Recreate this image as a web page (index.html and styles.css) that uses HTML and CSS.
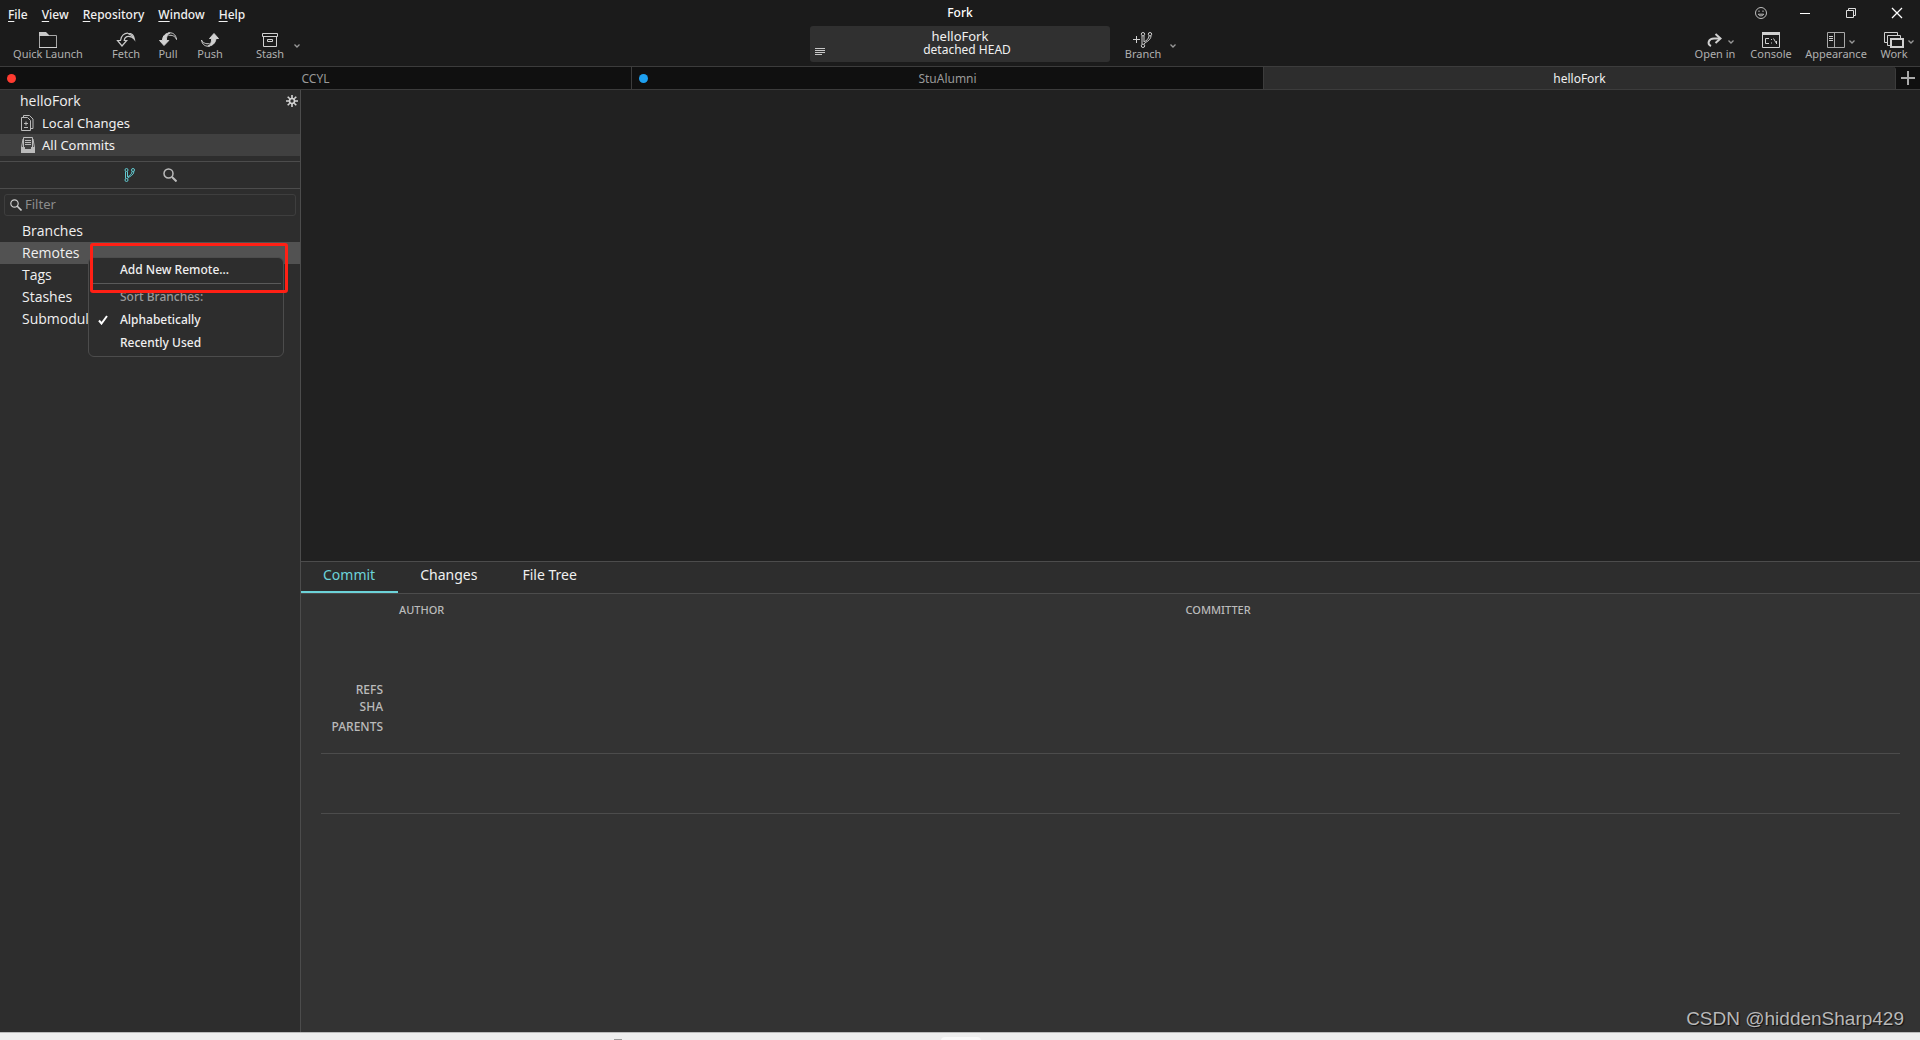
FILE: index.html
```html
<!DOCTYPE html>
<html lang="en">
<head>
<meta charset="utf-8">
<meta name="viewport" content="width=device-width, initial-scale=1">
<title>Fork</title>
<link rel="stylesheet" href="styles.css">
</head>
<body>
<header class="titlebar">
  <nav class="menubar" aria-label="Main menu">
    <button class="menubar-item"><u>F</u>ile</button>
    <button class="menubar-item"><u>V</u>iew</button>
    <button class="menubar-item"><u>R</u>epository</button>
    <button class="menubar-item"><u>W</u>indow</button>
    <button class="menubar-item"><u>H</u>elp</button>
  </nav>
  <h1 class="app-title">Fork</h1>
  <div class="window-controls">
    <button class="window-button window-feedback" aria-label="Feedback"><svg width="14" height="14" viewBox="0 0 14 14" fill="none" stroke="#bdbdbd"><circle cx="7" cy="7" r="5.5"/><path d="M4.3 8.2c.7 2.2 4.700 2.200 5.400 0z"/><path d="M5 4.500v1.500M9 4.500v1.500"/></svg></button>
    <button class="window-button" aria-label="Minimize"><svg width="12" height="12"><path d="M1 6.500h10" stroke="#fff"/></svg></button>
    <button class="window-button" aria-label="Restore"><svg width="12" height="12" fill="none" stroke="#ddd"><path d="M1.500 3.500h7v7h-7zM3.500 3.500v-2h7v7h-2"/></svg></button>
    <button class="window-button" aria-label="Close"><svg width="12" height="12"><path d="M1 1l10 10M11 1L1 11" stroke="#fff" stroke-width="1.300"/></svg></button>
  </div>
</header>

<div class="toolbar">
  <div class="tools">
    <button class="tool tool-launch"><span class="tool-icon"><svg width="20" height="16" fill="none" stroke="#a8a8a8"><path d="M1.500 2v13.500h17v-12H10"/><path d="M1 0h7l3 3v1H1z" fill="#c8c8c8" stroke="none"/><path d="M1 15.500h18" stroke="#d0d0d0"/></svg></span>Quick Launch</button>
    <div class="tool-group">
      <button class="tool"><span class="tool-icon"><svg width="20" height="16" viewBox="0 0 20 16" fill="none" stroke="#c8c8c8" stroke-width="1.200"><path d="M6 14L1.500 8.500h3C5 3.500 8.500 1 12 1.200c3.500 0 6 2.300 6.500 6.300C15.500 3.500 9 3 8.200 8.500h2.500z"/><path d="M18 6.500c-2-4-4.500-4.500-6-5"/></svg></span>Fetch</button>
      <button class="tool"><span class="tool-icon"><svg width="20" height="16" viewBox="0 0 20 16" fill="none" stroke="#d0d0d0"><path d="M6 13.500L1.500 8.500h3C4.500 3.500 8 1 12 1c-2 .8-3.500 3-3.700 7.500h2.500z" fill="#d0d0d0"/><path d="M10 1c4.500-1 8 1.500 8.500 6.500C17.500 4.500 14 2.500 10.500 3.500"/></svg></span>Pull</button>
      <button class="tool"><span class="tool-icon"><svg width="20" height="16" viewBox="0 0 20 16" fill="none" stroke="#d0d0d0"><path d="M14 1.500l4.500 5H16c-.5 5-4 7.500-8 7.500 2-.8 3.500-3 3.700-7.500H9.500z" fill="#d0d0d0"/><path d="M10 14c-4.500 1-8-1.500-8.500-6C2.500 10.500 6 12.500 9.500 11.500"/></svg></span>Push</button>
    </div>
    <div class="tool-split">
      <button class="tool"><span class="tool-icon"><svg width="18" height="16" fill="none" stroke="#d0d0d0"><path d="M1.500 1.500h15v3h-15zM2.500 4.500v10h13v-10"/><path d="M6.500 7.500h5v2h-5z"/></svg></span>Stash</button>
      <button class="chevron-button" aria-label="Stash options"><svg class="chevron" width="6" height="4"><path d="M.5 .5L3 3L5.500 .5" fill="none" stroke="#999" stroke-width="1.300"/></svg></button>
    </div>
  </div>
  <div class="repo-status">
    <button class="status-log" aria-label="Activity log"><svg width="10" height="8"><path d="M0 .5h10M0 2.500h10M0 4.500h10M0 6.500h7" stroke="#c8c8c8"/></svg></button>
    <strong class="status-name">helloFork</strong>
    <span class="status-head">detached HEAD</span>
  </div>
  <div class="tools tools-right">
    <div class="tool-split branch-split">
      <button class="tool tool-branch"><span class="tool-icon"><svg width="20" height="16" viewBox="0 0 20 16" fill="none" stroke="#d0d0d0"><path d="M0 7.500h7M3.500 4v7"/><circle cx="10" cy="2.200" r="1.700"/><circle cx="17" cy="2.200" r="1.700"/><circle cx="10" cy="13.800" r="1.700"/><path d="M9 4v8M11 4v6c2.500-1.500 4.800-3 5-6M18 4c-.3 4.500-5 5.500-7 8"/></svg></span>Branch</button>
      <button class="chevron-button" aria-label="Branch options"><svg class="chevron" width="6" height="4"><path d="M.5 .5L3 3L5.500 .5" fill="none" stroke="#999" stroke-width="1.300"/></svg></button>
    </div>
    <div class="tool-group tool-views">
      <button class="tool tool-medium"><span class="tool-icon"><svg width="18" height="16" fill="none" stroke="#d0d0d0" stroke-width="2"><path d="M5 14c-4-2-3-8 4-7.500h5"/><path d="M9.500 2L14.500 6.500L9.500 11"/></svg><svg class="chevron icon-chevron" width="6" height="4"><path d="M.5 .5L3 3L5.500 .5" fill="none" stroke="#999" stroke-width="1.300"/></svg></span>Open in</button>
      <button class="tool tool-medium"><span class="tool-icon"><svg width="18" height="16" fill="none" stroke="#d0d0d0"><path d="M.5 .5h17v15H.5z"/><path d="M0 1.500h18" stroke-width="3"/><path d="M7 6.500H3.500v5H7M9.500 7v1M9.500 10.500v1M11.500 6.500l3 5M14.500 9v3"/></svg></span>Console</button>
      <button class="tool tool-wide"><span class="tool-icon"><svg width="18" height="16" fill="none" stroke="#a8a8a8"><path d="M.5 .5h17v15H.5zM7.500 0v16"/><path d="M2 4.500h4M2 6.500h4M2 8.500h4" stroke="#d0d0d0"/></svg><svg class="chevron icon-chevron" width="6" height="4"><path d="M.5 .5L3 3L5.500 .5" fill="none" stroke="#999" stroke-width="1.300"/></svg></span>Appearance</button>
      <button class="tool"><span class="tool-icon"><svg width="20" height="16" fill="none" stroke="#d0d0d0"><path d="M3.500 10.500h-3V.5h13v3M6.500 13.500h-3v-10h13v3"/><path d="M7 7h12v8H7z" stroke-width="2"/></svg><svg class="chevron icon-chevron" width="6" height="4"><path d="M.5 .5L3 3L5.500 .5" fill="none" stroke="#999" stroke-width="1.300"/></svg></span>Work</button>
    </div>
  </div>
</div>

<div class="repo-tabs" role="tablist">
  <button class="repo-tab" role="tab"><i class="dot dot-red"></i>CCYL</button>
  <button class="repo-tab" role="tab"><i class="dot dot-blue"></i>StuAlumni</button>
  <button class="repo-tab repo-tab-active" role="tab" aria-selected="true">helloFork</button>
  <button class="add-tab" aria-label="New tab"><svg width="14" height="14"><path d="M7 0v14M0 7h14" stroke="#aaa" stroke-width="2"/></svg></button>
</div>

<div class="workspace">
  <aside class="sidebar">
    <div class="sidebar-top">
      <div class="side-row repo-row"><span>helloFork</span>
        <button class="gear" aria-label="Repository settings"><svg width="12" height="12" viewBox="0 0 12 12" fill="none" stroke="#d4d4d4"><circle cx="6" cy="6" r="2.500" stroke-width="1.600"/><path d="M6 0v3M6 9v3M0 6h3M9 6h3M1.700 1.700l2.100 2.100M8.200 8.200l2.100 2.100M1.700 10.300l2.100-2.100M8.200 3.800l2.100-2.100" stroke-width="1.600"/></svg></button>
      </div>
      <a class="side-row side-link" href="#changes"><svg width="14" height="16" fill="none" stroke="#bbb"><path d="M.5 2.500h6l3 3v10h-9z"/><path d="M2.500 2V.5h6l3.500 3.500v9.500h-2"/><path d="M3 8.500h4M5 6.500v4M3 12.500h4"/></svg>Local Changes</a>
      <a class="side-row side-link side-current" href="#commits"><svg width="14" height="16" fill="none" stroke="#bbb"><path d="M2.500 10.500V.5h9v10"/><path d="M4 3.500h6M4 5.500h6M4 7.500h6"/><path d="M2 2L.5 10.500v5h13v-5L12 2"/><path d="M0 10h4v2h6v-2h4v6H0z" fill="#bbb" stroke="none"/></svg>All Commits</a>
    </div>
    <div class="side-modes">
      <button aria-label="References"><svg width="12" height="14" viewBox="0 0 12 14" fill="none" stroke="#62c9d0"><circle cx="2.500" cy="2" r="1.500"/><circle cx="9" cy="2" r="1.500"/><circle cx="2.500" cy="12" r="1.500"/><path d="M1.500 3.500v7M3.500 3.500v5.500C6 7.500 8 6 8 3.500M10 3.500c-.2 4-4.500 4.500-6.500 7"/></svg></button>
      <button aria-label="Search"><svg width="14" height="14" fill="none" stroke="#bbb"><circle cx="5.500" cy="5.500" r="4.500" stroke-width="1.500"/><path d="M9 9l4.500 4.500" stroke-width="2"/></svg></button>
    </div>
    <label class="filter"><svg width="12" height="12" fill="none" stroke="#ccc"><circle cx="4.500" cy="4.500" r="3.700" stroke-width="1.200"/><path d="M7 7l4.500 4.500" stroke-width="1.600"/></svg><input type="text" placeholder="Filter" aria-label="Filter"></label>
    <ul class="refs">
      <li class="side-row">Branches</li>
      <li class="side-row ref-selected">Remotes
        <div class="context-menu" role="menu">
          <button class="menu-item" role="menuitem">Add New Remote...</button>
          <hr class="menu-line">
          <span class="menu-item menu-caption">Sort Branches:</span>
          <button class="menu-item" role="menuitem"><svg class="check" width="10" height="10"><path d="M1 5.500L3.500 8.500L9 1" fill="none" stroke="#fff" stroke-width="2"/></svg>Alphabetically</button>
          <button class="menu-item" role="menuitem">Recently Used</button>
        </div>
        <div class="highlight"></div>
      </li>
      <li class="side-row">Tags</li>
      <li class="side-row">Stashes</li>
      <li class="side-row">Submodules</li>
    </ul>
  </aside>

  <main class="content">
    <section class="commit-list" aria-label="Commits"></section>
    <section class="details">
      <div class="detail-tabs" role="tablist">
        <button class="detail-tab detail-tab-active" role="tab" aria-selected="true">Commit</button>
        <button class="detail-tab" role="tab">Changes</button>
        <button class="detail-tab" role="tab">File Tree</button>
      </div>
      <div class="detail-body">
        <div class="people"><span>AUTHOR</span><span>COMMITTER</span></div>
        <dl class="fields">
          <dt>REFS</dt><dd></dd>
          <dt>SHA</dt><dd></dd>
          <dt class="parents">PARENTS</dt><dd></dd>
        </dl>
        <div class="message"></div>
      </div>
      <p class="watermark">CSDN @hiddenSharp429</p>
    </section>
  </main>
</div>
<footer class="taskbar"><i class="task-dots"></i><i class="task-pill"></i></footer>
</body>
</html>
```
FILE: styles.css
```css
* { box-sizing: border-box; }

body {
  margin: 0;
  height: 100vh;
  display: flex;
  flex-direction: column;
  overflow: hidden;
  background: #1b1b1b;
  color: #f0f0f0;
  font: 13px/22px "Noto Sans", "Open Sans", sans-serif;
}

button {
  margin: 0;
  padding: 0;
  border: 0;
  background: none;
  color: inherit;
  font: inherit;
  text-align: left;
}

svg { display: block; flex: none; }

/* Title bar */
.titlebar {
  display: grid;
  grid-template-columns: 1fr auto 1fr;
  height: 26px;
}
.menubar {
  display: flex;
  align-items: center;
  gap: 14px;
  padding: 3px 8px 0;
  font-size: 12px;
  font-weight: 500;
}
.menubar u { text-underline-offset: 2px; }
.app-title {
  margin: 0;
  font-size: 12px;
  line-height: 26px;
  font-weight: 500;
  color: #fff;
}
.window-controls { display: flex; justify-content: flex-end; }
.window-button {
  width: 46px;
  display: flex;
  align-items: center;
  justify-content: center;
}
.window-feedback { width: 42px; }

/* Toolbar */
.toolbar {
  display: grid;
  grid-template-columns: 1fr 300px 1fr;
  height: 40px;
}
.tools {
  display: flex;
  padding: 6px 10px 0 12px;
  color: #b0b0b0;
  font-size: 11px;
  line-height: 12px;
}
.tool {
  width: 32px;
  display: flex;
  flex-direction: column;
  align-items: center;
  white-space: nowrap;
}
.tool-launch { width: 72px; }
.tool-branch { width: 38px; }
.tool-medium { width: 46px; }
.tool-wide { width: 64px; }
.tool-icon { position: relative; height: 16px; }
.tool-group { display: flex; gap: 10px; margin-left: 26px; }
.tool-split { display: flex; gap: 8px; margin-left: 28px; }
.chevron-button { height: 28px; }
.icon-chevron { position: absolute; left: calc(100% + 4px); top: 8px; }
.tools-right { justify-content: space-between; }
.branch-split { margin-left: 2px; }
.tool-views { gap: 10px; margin: 0; }

.repo-status {
  position: relative;
  height: 36px;
  padding-top: 3px;
  display: flex;
  flex-direction: column;
  align-items: center;
  border-radius: 3px;
  background: #303030;
  line-height: 14px;
}
.status-name { font-weight: 400; }
.status-head { padding-left: 14px; font-size: 12px; }
.status-log { position: absolute; left: 5px; bottom: 6px; }

/* Repository tabs */
.repo-tabs {
  display: flex;
  height: 24px;
  border: solid #3c3c3c;
  border-width: 1px 0;
  background: #101010;
  color: #999;
  font-size: 12px;
}
.repo-tab {
  position: relative;
  flex: 1;
  padding-top: 1px;
  text-align: center;
  border-right: 1px solid #3c3c3c;
}
.repo-tab-active {
  background: #2d2d2d;
  color: #f0f0f0;
  border-radius: 0 3px 0 0;
}
.dot {
  position: absolute;
  left: 7px;
  top: 7px;
  width: 9px;
  height: 9px;
  border-radius: 50%;
}
.dot-red { background: #ff3b30; }
.dot-blue { background: #1ea0f0; }
.add-tab {
  width: 24px;
  display: flex;
  align-items: center;
  justify-content: center;
}

/* Sidebar */
.workspace { flex: 1; min-height: 0; display: flex; }
.sidebar {
  width: 301px;
  flex: none;
  border-right: 1px solid #4c4c4c;
  background: #2d2d2d;
}
.side-row {
  height: 22px;
  display: flex;
  align-items: center;
  padding: 0 2px 0 22px;
  line-height: 20px;
}
.repo-row,
.refs { font: 14px/20px "Open Sans", "Noto Sans", sans-serif; }
.sidebar-top { padding-bottom: 5px; }
.repo-row { padding-left: 20px; justify-content: space-between; }
.side-link { gap: 7px; padding-left: 21px; color: inherit; text-decoration: none; }
.side-current { background: #404040; }
.side-modes {
  height: 28px;
  display: flex;
  align-items: center;
  justify-content: center;
  gap: 27px;
  border: solid #4c4c4c;
  border-width: 1px 0;
}
.filter {
  height: 22px;
  margin: 5px 4px 4px;
  padding: 0 5px;
  display: flex;
  align-items: center;
  gap: 3px;
  border: 1px solid #3e3e3e;
  border-radius: 3px;
}
.filter input {
  flex: 1;
  min-width: 0;
  height: 20px;
  padding: 0 0 2px;
  border: 0;
  outline: 0;
  background: none;
  color: #f0f0f0;
  font: inherit;
}
.filter input::placeholder { color: #8c8c8c; }
.refs { margin: 0; padding: 0; list-style: none; }
.ref-selected { position: relative; background: #525252; }

/* Context menu */
.context-menu {
  position: absolute;
  z-index: 1;
  left: 88px;
  top: 15px;
  width: 196px;
  padding: 0 2px 2px;
  border: 1px solid #4c4c4c;
  border-radius: 6px;
  background: #2d2d2d;
  font: 500 12px/22px "Noto Sans", "Open Sans", sans-serif;
}
.menu-item {
  position: relative;
  display: flex;
  align-items: center;
  width: 100%;
  height: 23px;
  padding-left: 29px;
  color: #f0f0f0;
}
.menu-caption { color: #999; }
.menu-line {
  height: 1px;
  margin: 2px 0 1px;
  border: 0;
  background: #5a5a5a;
}
.check { position: absolute; left: 7px; }
.highlight {
  position: absolute;
  z-index: 2;
  left: 90px;
  top: 1px;
  width: 198px;
  height: 50px;
  border: 3px solid #ff2015;
  border-radius: 3px;
  pointer-events: none;
}

/* Content */
.content {
  flex: 1;
  min-width: 0;
  display: grid;
  grid-template-rows: 1fr 1fr;
}
.commit-list { background: #212121; }
.details {
  position: relative;
  display: flex;
  flex-direction: column;
  background: #333;
}
.detail-tabs {
  display: flex;
  height: 33px;
  border: solid #4c4c4c;
  border-width: 1px 0;
  background: #2d2d2d;
  font-size: 14px;
}
.detail-tab { padding: 0 23px 5px 22px; }
.detail-tab-active {
  color: #6cd3d9;
  box-shadow: inset 0 -2px #6cd3d9;
}
.detail-body {
  padding: 8px 20px 0;
  color: #bbb;
  font-size: 12px;
  line-height: 16px;
  font-weight: 500;
}
.people {
  display: grid;
  grid-template-columns: 1fr 1fr;
  padding-left: 78px;
  gap: 72px;
  font-size: 11px;
}
.fields {
  display: grid;
  grid-template-columns: 62px 1fr;
  margin: 64px 0 18px;
  row-gap: 1px;
  text-align: right;
}
.fields dd { margin: 0; }
.parents { padding-top: 3px; }
.message {
  height: 61px;
  border: solid #4c4c4c;
  border-width: 1px 0;
}
.watermark {
  position: absolute;
  right: 16px;
  bottom: 1px;
  margin: 0;
  color: #b8b8b8;
  font: 19px/24px "Liberation Sans", Arial, sans-serif;
  text-shadow: 1px 1px 1px #111;
}

/* Taskbar edge below the window */
.taskbar {
  position: relative;
  height: 8px;
  flex: none;
  overflow: hidden;
  border-top: 1px solid #bbb;
  background: #eee;
}
.task-dots {
  position: absolute;
  left: 32%;
  bottom: 0;
  width: 8px;
  height: 1px;
  background: #999;
}
.task-pill {
  position: absolute;
  left: 49%;
  top: 4px;
  width: 40px;
  height: 8px;
  border-radius: 4px;
  background: #fafafa;
}
```
